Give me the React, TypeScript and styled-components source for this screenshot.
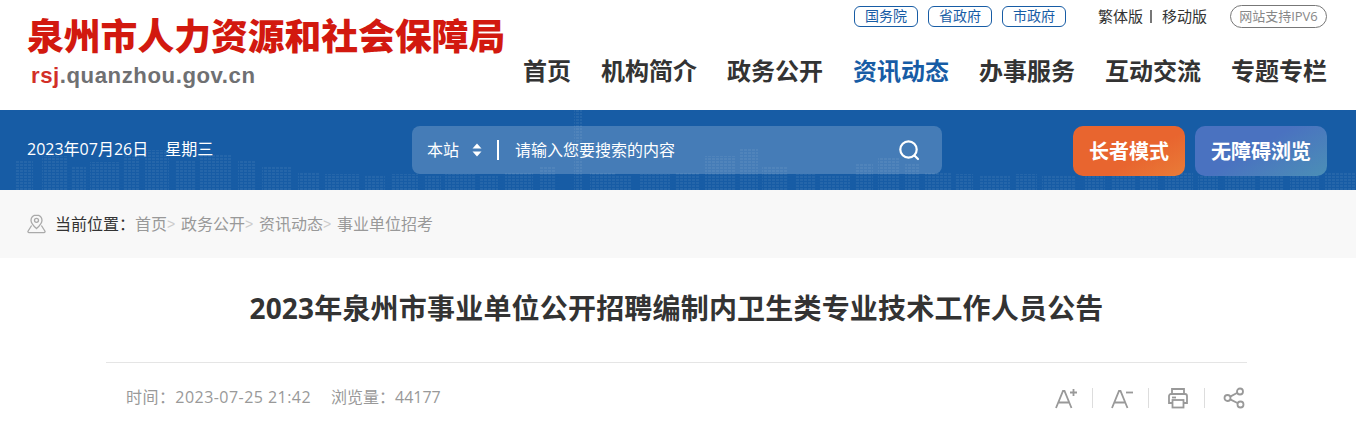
import React from "react";
import styled, { createGlobalStyle } from "styled-components";

const Global = createGlobalStyle`
  html, body {
    margin: 0;
    padding: 0;
    background: #fff;
    height: 444px;
    overflow: hidden;
    font-family: "Open Sans", "Noto Sans CJK SC", sans-serif;
  }
`;

const Page = styled.div`
  width: 1356px;
`;

const Header = styled.header`
  height: 110px;
  padding: 0 29px 0 27px;
  display: flex;
  justify-content: space-between;
`;

const Logo = styled.div`
  padding-top: 13px;
`;

const LogoTitle = styled.div`
  font-size: 36.8px;
  line-height: 46px;
  font-weight: 900;
  color: #d2190f;
  white-space: nowrap;
`;

const LogoUrl = styled.div`
  margin: 4px 0 0 4px;
  font-family: "Liberation Sans", Arial, sans-serif;
  font-size: 22.2px;
  line-height: 26px;
  letter-spacing: 0.55px;
  font-weight: 700;
  color: #6f7072;
`;

const LogoRed = styled.span`
  color: #d22f28;
`;

const HeaderRight = styled.div`
  display: flex;
  flex-direction: column;
  align-items: flex-end;
`;

const TopBar = styled.div`
  display: flex;
  align-items: center;
  height: 21px;
  margin-top: 6px;
`;

const GovLink = styled.a`
  box-sizing: border-box;
  width: 64px;
  height: 21px;
  margin-right: 10px;
  border: 1px solid #175ca5;
  border-radius: 6px;
  color: #175ca5;
  font-size: 14px;
  line-height: 18px;
  text-align: center;
`;

const PlainLink = styled.a<{ $first?: boolean }>`
  margin-left: ${(p) => (p.$first ? "22px" : "0")};
  font-size: 15px;
  color: #333;
  line-height: 21px;
`;

const Divider = styled.i`
  width: 2px;
  height: 13px;
  margin: 0 10px 0 7px;
  background: #777;
`;

const IpvBadge = styled.div`
  box-sizing: border-box;
  width: 97px;
  height: 23px;
  margin-left: 23px;
  border: 1px solid #777;
  border-radius: 12px;
  color: #888;
  font-size: 13px;
  line-height: 20px;
  text-align: center;
  white-space: nowrap;
`;

const Nav = styled.nav`
  display: flex;
  gap: 30px;
  margin-top: 26px;
`;

const NavItem = styled.a<{ $active?: boolean }>`
  font-size: 24px;
  line-height: 36px;
  font-weight: 700;
  color: ${(p) => (p.$active ? "#175ca5" : "#333")};
  white-space: nowrap;
`;

const Banner = styled.section`
  position: relative;
  height: 80px;
  padding: 16px 29px 0 27px;
  box-sizing: border-box;
  background: #175ca5;
  display: flex;
  overflow: hidden;
`;

const Skyline = styled.svg`
  position: absolute;
  left: 0;
  bottom: 0;
  width: 1356px;
  height: 80px;
  opacity: 0.06;
`;

const DateText = styled.div`
  position: relative;
  width: 385px;
  font-size: 16px;
  line-height: 47px;
  color: #fff;
  display: flex;
  gap: 17px;
  white-space: nowrap;
`;

const SearchBox = styled.div`
  position: relative;
  box-sizing: border-box;
  width: 530px;
  height: 48px;
  padding: 0 22px 0 15px;
  border-radius: 8px;
  background: rgba(255, 255, 255, 0.2);
  display: flex;
  align-items: center;
  color: #fff;
  font-size: 16px;
  line-height: 46px;
`;

const Scope = styled.span`
  width: 45px;
  margin-bottom: 1px;
`;

const SearchDivider = styled.i`
  width: 2px;
  height: 20px;
  margin: 0 16px 0 15px;
  background: #fff;
`;

const Placeholder = styled.span`
  flex: 1;
  margin-bottom: 1px;
`;

const ModeButton = styled.a<{ $wide?: boolean }>`
  position: relative;
  box-sizing: border-box;
  width: ${(p) => (p.$wide ? "132px" : "112px")};
  height: 50px;
  margin-left: ${(p) => (p.$wide ? "10px" : "131px")};
  border-radius: 10px;
  background: ${(p) =>
    p.$wide
      ? "linear-gradient(150deg, #4a72c0 45%, #4b8fb6 100%)"
      : "linear-gradient(150deg, #e8652f 60%, #e97c38 100%)"};
  color: #fff;
  font-size: 20px;
  font-weight: 700;
  line-height: 52px;
  text-align: center;
  white-space: nowrap;
`;

const Crumbs = styled.div`
  height: 68px;
  padding-left: 27px;
  background: #f8f8f8;
  display: flex;
  align-items: center;
  font-size: 16px;
  line-height: 24px;
  color: #999;
  white-space: nowrap;

  span {
    margin-bottom: 1px;
  }
`;

const CrumbLabel = styled.span`
  margin: 0 10px 0 9px;
  width: 70px;
  color: #333;
`;

const CrumbArrow = styled.span`
  width: 14px;
  color: #ccc;
  font-size: 14px;
  font-family: "Liberation Sans", sans-serif;
`;

const Article = styled.article`
  width: 1141px;
  margin-left: 106px;
`;

const Title = styled.h1`
  margin: 0;
  padding-top: 29px;
  height: 105px;
  box-sizing: border-box;
  border-bottom: 1px solid #e5e5e5;
  font-size: 28px;
  line-height: 42px;
  font-weight: 700;
  letter-spacing: 0.19px;
  color: #333;
  text-align: center;
  white-space: nowrap;
`;

const Meta = styled.div`
  height: 70px;
  padding: 0 2px 0 20px;
  display: flex;
  align-items: center;
  justify-content: space-between;
  font-size: 16px;
  color: #999;
`;

const MetaInfo = styled.div`
  display: flex;
  gap: 20px;
  margin-bottom: 4px;
  white-space: nowrap;
`;

const MetaTime = styled.span`
  letter-spacing: 0.45px;
`;

const Tools = styled.div`
  display: flex;
  align-items: center;
`;

const ToolIcon = styled.svg`
  display: block;
  width: 22px;
  height: 22px;
  fill: none;
  stroke: #999;
  stroke-width: 1.8;
`;

const ToolSep = styled.i`
  width: 1px;
  height: 20px;
  margin: 0 18px 0 15px;
  background: #ddd;
`;

const skylineBlocks: [number, number, number][] = [
  [15, 18, 30], [42, 26, 34], [72, 14, 24], [90, 30, 28], [124, 16, 36], [145, 24, 40], [175, 20, 30],
  [200, 32, 36], [238, 18, 30], [262, 30, 24], [298, 22, 18], [325, 34, 16], [365, 20, 14], [392, 26, 16],
  [425, 16, 14], [445, 30, 16], [480, 18, 14], [505, 28, 18], [540, 16, 24], [574, 8, 80], [590, 26, 18],
  [612, 20, 14], [640, 30, 16], [675, 24, 18], [705, 30, 34], [740, 18, 42], [762, 26, 24], [795, 20, 16],
  [820, 30, 14], [855, 18, 26], [878, 22, 32], [905, 14, 26], [925, 26, 18], [955, 18, 16], [980, 30, 14],
  [1015, 22, 16], [1042, 34, 14], [1085, 20, 24], [1112, 24, 16], [1140, 18, 30], [1165, 28, 18],
  [1198, 20, 14], [1225, 30, 18], [1260, 24, 16], [1290, 30, 14], [1325, 31, 18],
];

const navItems = ["首页", "机构简介", "政务公开", "资讯动态", "办事服务", "互动交流", "专题专栏"];

const App: React.FC = () => {
  return (
    <Page>
      <Global />
      <Header>
        <Logo>
          <LogoTitle>泉州市人力资源和社会保障局</LogoTitle>
          <LogoUrl>
            <LogoRed>rsj</LogoRed>.quanzhou.gov.cn
          </LogoUrl>
        </Logo>
        <HeaderRight>
          <TopBar>
            <GovLink>国务院</GovLink>
            <GovLink>省政府</GovLink>
            <GovLink>市政府</GovLink>
            <PlainLink $first>繁体版</PlainLink>
            <Divider />
            <PlainLink>移动版</PlainLink>
            <IpvBadge>网站支持IPV6</IpvBadge>
          </TopBar>
          <Nav>
            {navItems.map((item) => (
              <NavItem key={item} $active={item === "资讯动态"}>
                {item}
              </NavItem>
            ))}
          </Nav>
        </HeaderRight>
      </Header>

      <Banner>
        <Skyline viewBox="0 0 1356 80">
          <defs>
            <pattern id="windows" width="4" height="3" patternUnits="userSpaceOnUse">
              <rect width="3" height="2" fill="#fff" />
            </pattern>
          </defs>
          <g fill="url(#windows)">
            {skylineBlocks.map(([x, w, h]) => (
              <rect key={x} x={x} y={80 - h} width={w} height={h} />
            ))}
          </g>
        </Skyline>
        <DateText>
          <span>2023年07月26日</span>
          <span>星期三</span>
        </DateText>
        <SearchBox>
          <Scope>本站</Scope>
          <svg width="10" height="14" viewBox="0 0 10 14" fill="#fff">
            <path d="M5 0.5 9.5 5.5H0.5Z" />
            <path d="M5 13.5 9.5 8.5H0.5Z" />
          </svg>
          <SearchDivider />
          <Placeholder>请输入您要搜索的内容</Placeholder>
          <svg width="22" height="22" viewBox="0 0 22 22" fill="none" stroke="#fff" strokeWidth="2.2">
            <circle cx="10.5" cy="10.5" r="8.2" />
            <path d="M16.5 16.5 20 20" strokeLinecap="round" />
          </svg>
        </SearchBox>
        <ModeButton>长者模式</ModeButton>
        <ModeButton $wide>无障碍浏览</ModeButton>
      </Banner>

      <Crumbs>
        <svg width="19" height="20" viewBox="0 0 19 20" fill="none" stroke="#aaa" strokeWidth="1.3">
          <path d="M9.5 1C6.2 1 4 3.4 4 6.3 4 9.6 7.2 12.6 9.5 14.6 11.8 12.6 15 9.6 15 6.3 15 3.4 12.8 1 9.5 1Z" />
          <circle cx="9.5" cy="6.3" r="2" />
          <path d="M4.6 11.5 1 17.2C0.7 18 1.2 18.6 2 18.6H17C17.8 18.6 18.3 18 18 17.2L14.4 11.5" />
        </svg>
        <CrumbLabel>当前位置：</CrumbLabel>
        <span>首页</span>
        <CrumbArrow>&gt;</CrumbArrow>
        <span>政务公开</span>
        <CrumbArrow>&gt;</CrumbArrow>
        <span>资讯动态</span>
        <CrumbArrow>&gt;</CrumbArrow>
        <span>事业单位招考</span>
      </Crumbs>

      <Article>
        <Title>2023年泉州市事业单位公开招聘编制内卫生类专业技术工作人员公告</Title>
        <Meta>
          <MetaInfo>
            <MetaTime>时间：2023-07-25 21:42</MetaTime>
            <span>浏览量：44177</span>
          </MetaInfo>
          <Tools>
            <ToolIcon viewBox="0 0 22 22">
              <path d="M1 21 8 4H9.5L16.5 21M3.6 15.5H14" />
              <path d="M15 5.5H22M18.5 2V9" />
            </ToolIcon>
            <ToolSep />
            <ToolIcon viewBox="0 0 22 22">
              <path d="M1 21 8 4H9.5L16.5 21M3.6 15.5H14" />
              <path d="M15 5.5H22" />
            </ToolIcon>
            <ToolSep />
            <ToolIcon viewBox="0 0 22 22">
              <path d="M5 7V2H17V7" />
              <path d="M5 16H2V9C2 8 3 7 4 7H18C19 7 20 8 20 9V16H17" />
              <rect x="5.5" y="13" width="11" height="7.5" />
              <path d="M5 10.5H9" />
            </ToolIcon>
            <ToolSep />
            <ToolIcon viewBox="0 0 22 22">
              <circle cx="4.5" cy="11" r="3" />
              <circle cx="17" cy="4.5" r="3" />
              <circle cx="17.5" cy="17.5" r="3" />
              <path d="M7.2 9.6 14.4 5.8M7.2 12.4 14.9 16.2" />
            </ToolIcon>
          </Tools>
        </Meta>
      </Article>
    </Page>
  );
};

export default App;
